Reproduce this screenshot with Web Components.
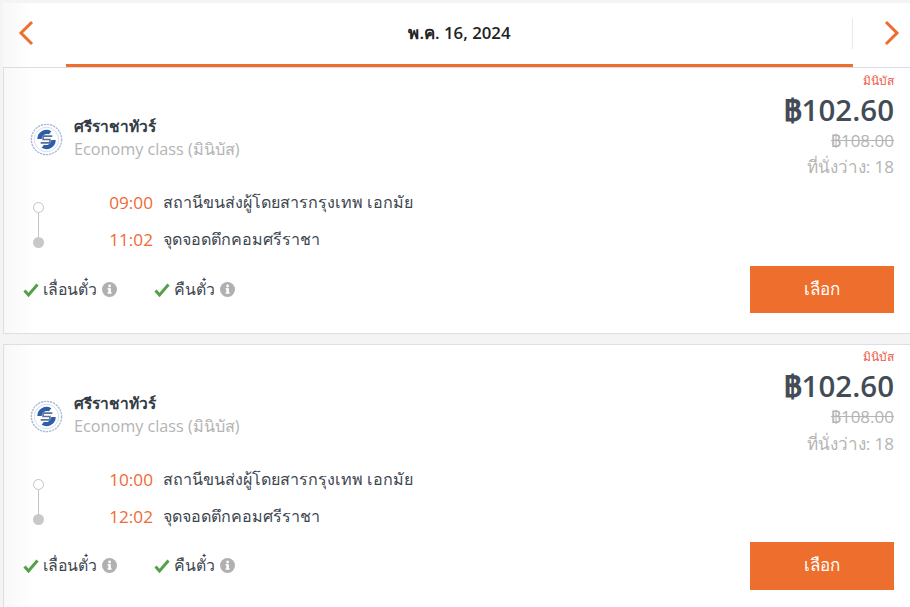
<!DOCTYPE html>
<html lang="th"><head><meta charset="utf-8"><title>Trips</title>
<style>
html,body{margin:0;padding:0;background:#f4f4f4;height:607px;overflow:hidden}
body{font-family:"Open Sans","Noto Sans","Noto Sans CJK SC",sans-serif;color:#3d4650}
</style></head><body>
<date-bar>พ.ค. 16, 2024</date-bar>
<trip-card dep="09:00" arr="11:02"></trip-card>
<trip-card dep="10:00" arr="12:02" class="last"></trip-card>
<script>
class DateBar extends HTMLElement{constructor(){super();this.attachShadow({mode:'open'}).innerHTML=`<style>
:host{display:grid;grid-template-columns:63px 787px 57px;height:64px;margin:3px 0 0 3px;background:linear-gradient(90deg,#f8f8f8,#fff 30px);border-bottom:1px solid #dcdce2}
.nav{display:flex;align-items:center;justify-content:center;padding-bottom:5px;height:64px;box-sizing:border-box}
.nav svg{width:16px;height:26px;display:block}
.l{padding-right:17px}.r{padding-left:21px}
.tab{position:relative;display:flex;align-items:center;justify-content:center;font:600 16.8px "Open Sans",sans-serif;color:#222;border-bottom:3px solid #ee6f2d;height:61px}
.tab span{transform:translateY(-1px)}
.tab::after{content:"";position:absolute;right:0;top:15px;height:31px;width:1px;background:#e9e9e9}
</style>
<div class="nav l"><svg viewBox="0 0 16 26"><path d="M14 2 3 13l11 11" fill="none" stroke="#ee6f2d" stroke-width="3"/></svg></div>
<div class="tab"><span><slot></slot></span></div>
<div class="nav r"><svg viewBox="0 0 16 26"><path d="M2 2l11 11L2 24" fill="none" stroke="#ee6f2d" stroke-width="3"/></svg></div>`}}
customElements.define('date-bar',DateBar);

class RouteStops extends HTMLElement{constructor(){super();this.attachShadow({mode:'open'}).innerHTML=`<style>
:host{display:grid;grid-template-columns:36px 1fr;margin-left:29px;height:76px}
.line{display:flex;flex-direction:column;align-items:center;padding-top:18px;width:11px}
.a{width:11px;height:11px;box-sizing:border-box;border:1px solid #c4c4c4;border-radius:50%;background:#fff}
.b{width:1px;height:25px;background:#c4c4c4}
.c{width:11px;height:11px;border-radius:50%;background:#c8c8c8;margin-top:-1px}
.rows{display:grid;grid-auto-rows:37px;margin-left:38px}
.row{display:flex;align-items:center;font-size:16.1px;color:#3d4650;gap:10px;height:37px}
.t{color:#ef6a34;width:46px;text-align:right;font-size:17.2px;white-space:nowrap}
</style>
<div class="line"><div class="a"></div><div class="b"></div><div class="c"></div></div>
<div class="rows">
<div class="row"><span class="t">${this.getAttribute('dep')}</span><span>สถานีขนส่งผู้โดยสารกรุงเทพ เอกมัย</span></div>
<div class="row"><span class="t">${this.getAttribute('arr')}</span><span>จุดจอดตึกคอมศรีราชา</span></div>
</div>`}}
customElements.define('route-stops',RouteStops);

class PolicyTag extends HTMLElement{constructor(){super();this.attachShadow({mode:'open'}).innerHTML=`<style>
:host{display:inline-flex;align-items:center;font-size:15.8px;color:#3d4650}
svg.c{width:16px;height:14px;margin-right:4px}
svg.i{width:15px;height:15px;margin-left:5px}
</style>
<svg class="c" viewBox="0 0 16 14"><path d="M1.5 7.5 5.5 12 14.5 1.5" fill="none" stroke="#55a048" stroke-width="3"/></svg>
<span><slot></slot></span>
<svg class="i" viewBox="0 0 15 15"><circle cx="7.5" cy="7.5" r="7.5" fill="#b0b0b0"/><rect x="6.3" y="6.2" width="2.6" height="5.3" fill="#fff"/><rect x="5.5" y="10.3" width="4.2" height="1.3" fill="#fff"/><rect x="5.5" y="6.2" width="2" height="1.2" fill="#fff"/><circle cx="7.6" cy="4" r="1.4" fill="#fff"/></svg>`}}
customElements.define('policy-tag',PolicyTag);

class TripCard extends HTMLElement{constructor(){super();this.attachShadow({mode:'open'}).innerHTML=`<style>
:host{display:block;margin:0 0 10px 3px;height:266px;box-sizing:border-box;background:linear-gradient(90deg,#f8f8f8,#fff 30px);border:solid #dfdfe3;border-width:0 0 1px 1px;position:relative;font-family:"Open Sans","Noto Sans",sans-serif}
:host(.last){border-top-width:1px;height:267px}
.wrap{display:grid;grid-template-columns:1fr auto;height:100%;box-sizing:border-box;padding:5px 16px 20px 0}
.left{display:flex;flex-direction:column}
.op{display:flex;align-items:center;gap:11px;margin:44px 0 0 26px;height:44px}
.logo{width:33px;height:33px;flex:none}
.ti{transform:translateY(-1px)}
.name{font-size:15.5px;font-weight:600;color:#333b44;line-height:22px}
.cls{font-size:16.2px;color:#b4b4b4;line-height:25px;white-space:nowrap}
route-stops{margin-top:23px}
.pol{display:flex;gap:37px;margin:17px 0 0 19px}
:host(.last) .pol{margin-top:16px}
.right{display:flex;flex-direction:column;align-items:flex-end}
.k{font-size:12px;color:#ee5a45;line-height:15px}
:host(.last) .k{margin-top:-1px}
.p{font-size:29.5px;font-weight:600;color:#434c56;line-height:36px;margin:4px 0 1px}
.o{font-size:17px;color:#b4b4b4;text-decoration:line-through;line-height:24px}
.s{font-size:17px;color:#b4b4b4;line-height:24px;margin-top:2px}
:host(.last) .s{margin-top:3px}
.btn{margin-top:auto;width:144px;height:47px;box-sizing:border-box;padding-bottom:3px;background:#ee6f2d;color:#fff;font-size:17px;font-weight:500;display:flex;align-items:center;justify-content:center}
:host(.last) .btn{height:48px}
</style>
<div class="wrap"><div class="left">
<div class="op">
<svg class="logo" viewBox="0 0 34 34"><circle cx="17" cy="17" r="15.6" fill="#fff" stroke="#a9bbd9" stroke-width="1.4" stroke-dasharray="2.4 .8"/><circle cx="17" cy="17" r="12.6" fill="none" stroke="#d3dcec" stroke-width="1"/><path d="M7.5 16.5a9.5 9.5 0 0 1 14.5-8l-2.4 3.2A5.6 5.6 0 0 0 12 16.5z" fill="#2f5ea8"/><path d="M26.5 17.5a9.5 9.5 0 0 1-14.5 8l2.4-3.2a5.6 5.6 0 0 0 7.6-4.8z" fill="#2f5ea8"/><path d="M23 13.5h-9.5v3.5h7v3.5H11" fill="none" stroke="#5a6f96" stroke-width="1.7"/></svg>
<div class="ti"><div class="name">ศรีราชาทัวร์</div><div class="cls">Economy class (มินิบัส)</div></div>
</div>
<route-stops dep="${this.getAttribute('dep')}" arr="${this.getAttribute('arr')}"></route-stops>
<div class="pol"><policy-tag>เลื่อนตั๋ว</policy-tag><policy-tag>คืนตั๋ว</policy-tag></div>
</div>
<div class="right">
<div class="k">มินิบัส</div><div class="p">฿102.60</div><div class="o">฿108.00</div><div class="s">ที่นั่งว่าง: 18</div>
<div class="btn">เลือก</div>
</div></div>`}}
customElements.define('trip-card',TripCard);
</script></body></html>
